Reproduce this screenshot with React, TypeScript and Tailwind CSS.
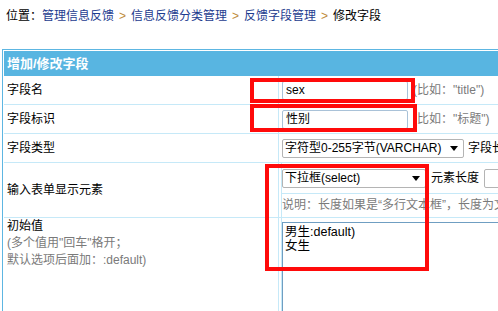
import React from 'react';

const FONT = '"Liberation Sans", "Noto Sans CJK SC", sans-serif';

function Arrow() {
  return (
    <svg width="8" height="5" viewBox="0 0 8 5" className="shrink-0">
      <polygon points="0,0 8,0 4,5" fill="#000" />
    </svg>
  );
}

function Select({ text, width }: { text: string; width: string }) {
  return (
    <div
      className={`${width} h-[19px] flex items-center justify-between border border-[#b4b4b4] rounded-[2px] bg-white pl-[2px] pr-[5px] text-black`}
    >
      <span className="whitespace-nowrap">{text}</span>
      <Arrow />
    </div>
  );
}

function TextInput({ value }: { value: string }) {
  return (
    <div className="w-[126px] h-[19px] flex items-center border border-[#a9c2d8] rounded-[2px] bg-white pl-[3px] text-black">
      {value}
    </div>
  );
}

export default function App() {
  return (
    <div
      className="relative w-[498px] h-[311px] overflow-hidden bg-white text-[12px] leading-[17px] text-black"
      style={{ fontFamily: FONT }}
    >
      {/* Breadcrumb */}
      <div className="h-[49px] pt-[8px] pl-[6px] whitespace-nowrap">
        <span>位置：</span>
        <span className="text-[#1d3c8f]">管理信息反馈</span>
        <span className="px-[5px] text-[#c08a3a]">&gt;</span>
        <span className="text-[#1d3c8f]">信息反馈分类管理</span>
        <span className="px-[5px] text-[#c08a3a]">&gt;</span>
        <span className="text-[#1d3c8f]">反馈字段管理</span>
        <span className="px-[5px] text-[#c08a3a]">&gt;</span>
        <span>修改字段</span>
      </div>

      {/* Panel */}
      <div className="ml-[2px] w-[620px] border-l border-t border-[#5db6e2] pl-[1px] pt-[1px]">
        <div className="h-[25px] bg-[#58b5e1] flex items-center pl-[3px] text-white font-bold text-[13px]">
          增加/修改字段
        </div>

        {/* 字段名 */}
        <div className="flex h-[29px] border-b border-[#c6e9f8]">
          <div className="w-[275px] border-r border-[#c6e9f8] pl-[3px] flex items-center">字段名</div>
          <div className="flex-1 flex items-center pl-[3px] gap-[5px]">
            <TextInput value="sex" />
            <span className="text-[#7a7a7a] whitespace-nowrap">(比如："title")</span>
          </div>
        </div>

        {/* 字段标识 */}
        <div className="flex h-[29px] border-b border-[#c6e9f8]">
          <div className="w-[275px] border-r border-[#c6e9f8] pl-[3px] flex items-center">字段标识</div>
          <div className="flex-1 flex items-center pl-[3px] gap-[5px]">
            <TextInput value="性别" />
            <span className="text-[#7a7a7a] whitespace-nowrap">(比如："标题")</span>
          </div>
        </div>

        {/* 字段类型 */}
        <div className="flex h-[29px] border-b border-[#c6e9f8]">
          <div className="w-[275px] border-r border-[#c6e9f8] pl-[3px] flex items-center">字段类型</div>
          <div className="flex-1 flex items-center pl-[3px] gap-[4px]">
            <Select text="字符型0-255字节(VARCHAR)" width="w-[182px]" />
            <span className="whitespace-nowrap">字段长度</span>
          </div>
        </div>

        {/* 输入表单显示元素 */}
        <div className="flex h-[55px] border-b border-[#c6e9f8]">
          <div className="w-[275px] border-r border-[#c6e9f8] pl-[3px] flex items-center">输入表单显示元素</div>
          <div className="flex-1 ml-[2px] border-l border-[#c6e9f8] flex flex-col">
            <div className="h-[31px] border-b border-[#c6e9f8] flex items-center gap-[5px]">
              <Select text="下拉框(select)" width="w-[144px]" />
              <span className="whitespace-nowrap">元素长度</span>
              <div className="w-[60px] h-[19px] border border-[#b4b4b4] rounded-[2px]" />
            </div>
            <div className="flex-1 flex items-center text-[#7a7a7a] whitespace-nowrap">
              说明：长度如果是“多行文本框”，长度为文本框的宽度
            </div>
          </div>
        </div>

        {/* 初始值 */}
        <div className="flex h-[120px]">
          <div className="w-[275px] border-r border-[#c6e9f8] pl-[3px]">
            <div>初始值</div>
            <div className="text-[#7a7a7a]">(多个值用"回车"格开；</div>
            <div className="text-[#7a7a7a]">默认选项后面加：:default)</div>
          </div>
          <div className="flex-1 ml-[2px] border-l border-[#c6e9f8] pt-[4px]">
            <div className="h-[110px] border-t border-l border-[#6f9ec2] pl-[2px] pt-[2px] leading-[14px] text-[12.5px]">
              <div>男生:default)</div>
              <div>女生</div>
            </div>
          </div>
        </div>
      </div>

      {/* Annotation boxes */}
      <div className="absolute left-[250px] top-[78px] w-[165px] h-[25px] border-[4px] border-[#ff0a0a]" />
      <div className="absolute left-[250px] top-[104px] w-[167px] h-[28px] border-[4px] border-[#ff0a0a]" />
      <div className="absolute left-[265px] top-[164px] w-[164px] h-[107px] border-[4px] border-[#ff0a0a]" />
    </div>
  );
}
